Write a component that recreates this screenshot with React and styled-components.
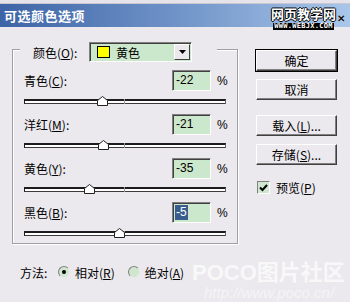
import React from 'react';
import styled, { createGlobalStyle } from 'styled-components';

const GlobalStyle = createGlobalStyle`
  html, body {
    margin: 0;
    padding: 0;
    background: #ebe9ed;
  }
  body {
    font-family: "Noto Sans CJK SC", "Liberation Sans", sans-serif;
    font-size: 12px;
    color: #000;
  }
`;

const channels = [
  { name: '青色', key: 'C', value: -22 },
  { name: '洋红', key: 'M', value: -21 },
  { name: '黄色', key: 'Y', value: -35 },
  { name: '黑色', key: 'B', value: -5, selected: true },
];

const App = () => {
  return (
    <>
      <GlobalStyle />
      <Window>
        <TopStrip />
        <TitleBar>
          <TitleText>可选颜色选项</TitleText>
          <TitleMark>
            <MarkStack>
              <MarkBig>网页教学网</MarkBig>
              <MarkSmall>WWW.WEBJX.COM</MarkSmall>
            </MarkStack>
            <CloseX>✕</CloseX>
          </TitleMark>
        </TitleBar>

        <Body>
          <LeftCol>
            <GroupBox>
              <Legend>
                <LegendLabel>
                  颜色(<u>O</u>):
                </LegendLabel>
                <Dropdown>
                  <Swatch />
                  <DropText>黄色</DropText>
                  <DropButton>
                    <svg width="7" height="4" viewBox="0 0 7 4">
                      <polygon points="0,0 7,0 3.5,4" fill="#000" />
                    </svg>
                  </DropButton>
                </Dropdown>
              </Legend>

              <Rows>
                {channels.map((c) => (
                  <Row key={c.key}>
                    <InputLine>
                      <RowLabel>
                        {c.name}(<u>{c.key}</u>):
                      </RowLabel>
                      <NumBox>
                        <NumText $selected={c.selected}>{c.value}</NumText>
                      </NumBox>
                      <Percent>%</Percent>
                    </InputLine>
                    <SliderLine>
                      <Track />
                      <Thumb style={{ left: `${c.value + 100 - 5}px` }}>
                        <svg width="11" height="10" viewBox="0 0 11 10">
                          <polygon
                            points="0.5,9.5 0.5,4.5 5.5,0.5 10.5,4.5 10.5,9.5"
                            fill="#fff"
                            stroke="#222"
                          />
                        </svg>
                      </Thumb>
                    </SliderLine>
                  </Row>
                ))}
              </Rows>
            </GroupBox>

            <MethodRow>
              <MethodLabel>方法:</MethodLabel>
              <Radio $checked />
              <RadioText>
                相对(<u>R</u>)
              </RadioText>
              <Radio />
              <RadioText>
                绝对(<u>A</u>)
              </RadioText>
            </MethodRow>
          </LeftCol>

          <RightCol>
            <Button $default>确定</Button>
            <Button $gap={8}>取消</Button>
            <Button $gap={15}>
              载入(<u>L</u>)...
            </Button>
            <Button $gap={8}>
              存储(<u>S</u>)...
            </Button>
            <CheckRow>
              <CheckBox>
                <svg width="9" height="8" viewBox="0 0 9 8">
                  <polyline
                    points="1,3.5 3.5,6 8,1"
                    fill="none"
                    stroke="#000"
                    strokeWidth="2"
                  />
                </svg>
              </CheckBox>
              <CheckText>
                预览(<u>P</u>)
              </CheckText>
            </CheckRow>
          </RightCol>
        </Body>

        <Poco>
          <PocoBig>
            POCO<PocoCjk>图片社区</PocoCjk>
          </PocoBig>
          <PocoUrl>http://www.poco.cn/</PocoUrl>
        </Poco>
      </Window>
    </>
  );
};

export default App;

const Window = styled.div`
  position: relative;
  width: 350px;
  height: 302px;
  overflow: hidden;
  background: #ebe9ed;
`;

const TopStrip = styled.div`
  height: 4px;
  background: #e6e4ea;
  border-bottom: 1px solid #c9c7cf;
  box-sizing: border-box;
`;

const TitleBar = styled.div`
  height: 23px;
  display: flex;
  align-items: center;
  justify-content: space-between;
  padding-left: 4px;
  background: linear-gradient(to right, #3d64a6 0%, #6f93c8 50%, #a9c6ea 100%);
`;

const TitleText = styled.div`
  color: #fff;
  font-weight: bold;
  font-size: 13px;
  letter-spacing: 0.5px;
`;

const TitleMark = styled.div`
  display: flex;
  align-items: flex-start;
  height: 23px;
`;

const MarkStack = styled.div`
  display: flex;
  flex-direction: column;
  align-items: center;
  padding-top: 3px;
`;

const MarkBig = styled.div`
  color: #fff;
  font-size: 13px;
  line-height: 14px;
  font-weight: bold;
  text-shadow: 1px 0 0 #000, -1px 0 0 #000, 0 1px 0 #000, 0 -1px 0 #000;
`;

const MarkSmall = styled.div`
  margin-top: 2px;
  color: #fff;
  font-family: "DejaVu Sans Mono", monospace;
  font-size: 7px;
  line-height: 7px;
  font-weight: bold;
  letter-spacing: 0.3px;
  background: #000;
  padding: 0 1px;
`;

const CloseX = styled.div`
  margin: 6px 5px 0 1px;
  font-size: 10px;
  font-weight: bold;
  color: #111;
  text-shadow: 0 0 1px #fff;
`;

const Body = styled.div`
  display: flex;
`;

const LeftCol = styled.div`
  display: flex;
  flex-direction: column;
  margin-left: 12px;
  margin-top: 22px;
`;

const GroupBox = styled.div`
  box-sizing: border-box;
  width: 226px;
  height: 195px;
  border: 1px solid #a09ea6;
  box-shadow: inset 1px 1px 0 #fff, 1px 1px 0 #fff;
  display: flex;
  flex-direction: column;
`;

const Legend = styled.div`
  display: flex;
  align-items: center;
  width: 197px;
  height: 20px;
  margin: -8px 0 0 7px;
  padding-left: 13px;
  box-sizing: border-box;
  background: #ebe9ed;
`;

const LegendLabel = styled.div`
  width: 56px;
`;

const Dropdown = styled.div`
  box-sizing: border-box;
  width: 103px;
  height: 20px;
  display: flex;
  align-items: center;
  background: #cce8cc;
  border-top: 1px solid #808080;
  border-left: 1px solid #808080;
  border-bottom: 1px solid #fff;
  border-right: 1px solid #fff;
  box-shadow: inset 1px 1px 0 #404040;
`;

const Swatch = styled.div`
  width: 13px;
  height: 12px;
  margin-left: 7px;
  background: #ffff00;
  border: 1px solid #000;
  box-sizing: border-box;
`;

const DropText = styled.div`
  margin-left: 6px;
  flex: 1;
`;

const DropButton = styled.div`
  box-sizing: border-box;
  width: 16px;
  height: 16px;
  margin-right: 1px;
  display: flex;
  align-items: center;
  justify-content: center;
  background: #ebe9ed;
  border-top: 1px solid #fff;
  border-left: 1px solid #fff;
  border-bottom: 1px solid #404040;
  border-right: 1px solid #404040;
`;

const Rows = styled.div`
  display: flex;
  flex-direction: column;
  margin-top: 8px;
  padding: 0 11px 0 11px;
`;

const Row = styled.div`
  display: flex;
  flex-direction: column;
  height: 44px;
`;

const InputLine = styled.div`
  display: flex;
  align-items: center;
  height: 21px;
`;

const RowLabel = styled.div`
  flex: 1;
`;

const NumBox = styled.div`
  box-sizing: border-box;
  width: 39px;
  height: 21px;
  display: flex;
  align-items: center;
  padding-left: 2px;
  background: #cce8cc;
  border-top: 1px solid #808080;
  border-left: 1px solid #808080;
  border-bottom: 1px solid #fff;
  border-right: 1px solid #fff;
  box-shadow: inset 1px 1px 0 #404040;
`;

const NumText = styled.span`
  font-family: "Liberation Sans", sans-serif;
  font-size: 12px;
  line-height: 15px;
  padding: 0 1px;
  background: ${(p) => (p.$selected ? '#3a5d8f' : 'transparent')};
  color: ${(p) => (p.$selected ? '#fff' : '#000')};
`;

const Percent = styled.div`
  width: 9px;
  margin-left: 6px;
  font-family: "Liberation Sans", sans-serif;
`;

const SliderLine = styled.div`
  position: relative;
  height: 23px;
`;

const Track = styled.div`
  position: relative;
  box-sizing: border-box;
  margin-top: 8px;
  height: 5px;
  background: #fff;
  border-top: 2px solid #1c1c1c;
  border-left: 1px solid #1c1c1c;
  border-bottom: 1px solid #3a3a3a;
  border-right: 1px solid #6a6a6a;

  &::after {
    content: '';
    position: absolute;
    left: 99px;
    top: -2px;
    width: 1px;
    height: 5px;
    background: #9a9a9a;
  }
`;

const Thumb = styled.div`
  position: absolute;
  top: 5px;
  width: 11px;
  height: 10px;
  line-height: 0;
`;

const MethodRow = styled.div`
  display: flex;
  align-items: center;
  height: 20px;
  margin-top: 18px;
  padding-left: 8px;
`;

const MethodLabel = styled.div`
  width: 38px;
`;

const Radio = styled.div`
  position: relative;
  box-sizing: border-box;
  width: 12px;
  height: 12px;
  border-radius: 50%;
  background: #cfe6cf;
  border: 1px solid;
  border-color: #808080 #e8e8e8 #e8e8e8 #808080;

  &::after {
    content: '';
    display: ${(p) => (p.$checked ? 'block' : 'none')};
    position: absolute;
    left: 3px;
    top: 3px;
    width: 4px;
    height: 4px;
    border-radius: 50%;
    background: #000;
  }
`;

const RadioText = styled.div`
  margin-left: 5px;
  margin-right: 13px;
`;

const RightCol = styled.div`
  display: flex;
  flex-direction: column;
  margin-left: 18px;
  margin-top: 23px;
`;

const Button = styled.div`
  box-sizing: border-box;
  width: 81px;
  height: 21px;
  margin-top: ${(p) => (p.$gap ? `${p.$gap}px` : '0')};
  display: flex;
  align-items: center;
  justify-content: center;
  background: #ebe9ed;
  border-top: 1px solid #fff;
  border-left: 1px solid #fff;
  border-bottom: 1px solid #404040;
  border-right: 1px solid #404040;
  box-shadow: ${(p) =>
    p.$default
      ? '0 0 0 1px #000, inset -1px -1px 0 #808080'
      : 'inset -1px -1px 0 #808080'};
`;

const CheckRow = styled.div`
  display: flex;
  align-items: center;
  margin-top: 14px;
  margin-left: 1px;
`;

const CheckBox = styled.div`
  box-sizing: border-box;
  width: 13px;
  height: 13px;
  display: flex;
  align-items: center;
  justify-content: center;
  background: #cfe6cf;
  border-top: 1px solid #808080;
  border-left: 1px solid #808080;
  border-bottom: 1px solid #fff;
  border-right: 1px solid #fff;
`;

const CheckText = styled.div`
  margin-left: 6px;
`;

const Poco = styled.div`
  position: absolute;
  left: 192px;
  top: 257px;
  display: flex;
  flex-direction: column;
  pointer-events: none;
`;

const PocoBig = styled.div`
  font-family: "Liberation Sans", sans-serif;
  font-weight: bold;
  font-size: 22px;
  line-height: 26px;
  color: rgba(255, 255, 255, 0.7);
`;

const PocoCjk = styled.span`
  font-family: "Noto Sans CJK SC", sans-serif;
`;

const PocoUrl = styled.div`
  margin-left: 12px;
  font-family: "Liberation Sans", sans-serif;
  font-style: italic;
  font-size: 15px;
  line-height: 14px;
  color: rgba(255, 255, 255, 0.5);
`;
